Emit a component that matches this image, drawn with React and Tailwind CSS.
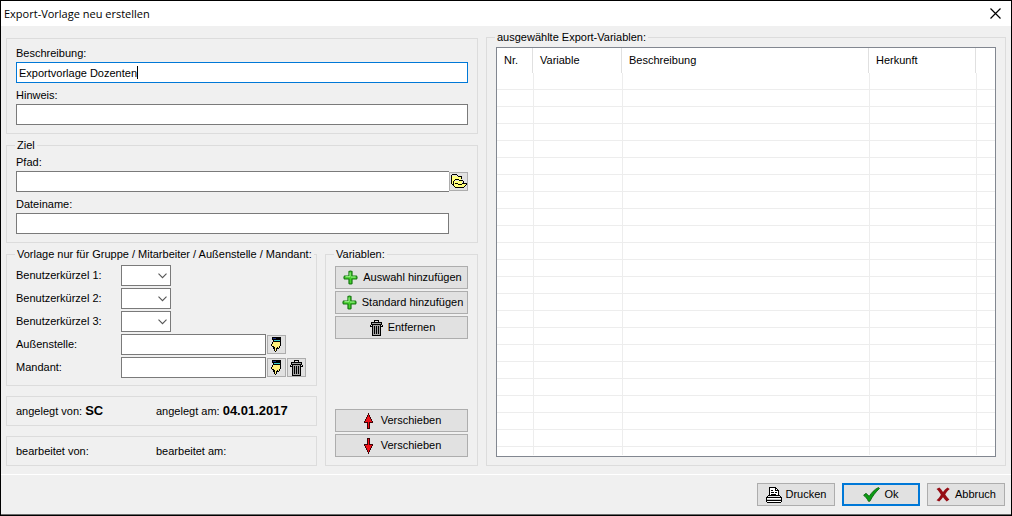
import React from "react";

const svgProps = { xmlns: "http://www.w3.org/2000/svg", "aria-hidden": true };

function PlusIcon() {
  return (
    <svg {...svgProps} width="15" height="15" viewBox="0 0 15 15" className="shrink-0">
      <path d="M6 1.500q1.500-1 3 0V6h4.500q1 1.500 0 3H9v4.500q-1.500 1-3 0V9H1.500q-1-1.500 0-3H6z" fill="#45cf2c" stroke="#14780f" strokeWidth="1.200" strokeLinejoin="round" />
      <path d="M7 2.500v4.200H2.500M8 7h4.500" fill="none" stroke="#a5f596" strokeWidth="1" />
    </svg>
  );
}

function TrashIcon() {
  return (
    <svg {...svgProps} width="13" height="16" viewBox="0 0 13 16" shapeRendering="crispEdges" className="shrink-0">
      <path d="M2 3h9v1H2zM3 5h7v10H3z" fill="#a3a3a3" />
      <path d="M4 0h5v1H4zM4 1h1v1H4zM8 1h1v1H8zM1 2h11v1H1zM1 4h11v1H1zM1 3h1v1H1zM11 3h1v1h-1zM0 5h1v2H0zM12 5h1v2h-1zM1 6h1v1H1zM11 6h1v1h-1z" fill="#000" />
      <path d="M2 5h1v10H2zM10 5h1v10h-1zM4 6h1v8H4zM6 6h1v8H6zM8 6h1v8H8zM2 15h9v1H2z" fill="#000" />
    </svg>
  );
}

function HandIcon() {
  return (
    <svg {...svgProps} width="11" height="16" viewBox="0 0 11 16" shapeRendering="crispEdges" className="shrink-0">
      <path d="M1 0h9v3H1zM2 3h8v2H2z" fill="#000" />
      <path d="M2 1h3v1H2z" fill="#1b2f80" />
      <path d="M3 3h6v1H3z" fill="#35cfcf" />
      <path d="M2 5h7v5H2zM1 7h1v2H1zM4 10h2v4H4zM7 10h1v1H7z" fill="#fff07c" />
      <path d="M1 5h1v2H1zM0 7h1v2H0zM1 9h1v1H1zM2 9h1v3H2zM3 10h1v4H3zM4 14h1v1H4zM5 11h1v3H5zM6 10h1v2H6zM8 9h1v2H8zM9 5h1v4H9zM7 11h1v1H7z" fill="#000" />
    </svg>
  );
}

function FolderIcon() {
  return (
    <svg {...svgProps} width="16" height="15" viewBox="0 0 16 15" shapeRendering="crispEdges" className="shrink-0">
      <path d="M1 2h5v1h4v3H3v5H1zM3 7h8v4h-1v2H3zM6 10h9v1h-1v1h-1v1H5z" fill="#ffff7c" />
      <path d="M1 0h5v1H1zM0 1h1v9H0zM6 1h1v1H6zM7 2h4v1H7zM10 3h1v2h-1zM1 10h2v1H1z" fill="#000" />
      <path d="M4 5h4v1H4zM3 6h1v1H3zM2 7h1v5H2zM8 6h4v1H8zM12 7h1v2h-1z" fill="#000" />
      <path d="M4 9h3v1H4zM7 10h4v1H7zM11 9h5v1h-5zM15 10h1v1h-1zM14 11h1v1h-1zM13 12h1v1h-1zM4 13h9v1H4zM3 12h1v1H3z" fill="#000" />
    </svg>
  );
}

function ArrowIcon({ down }) {
  return (
    <svg {...svgProps} width="9" height="16" viewBox="0 0 9 16" shapeRendering="crispEdges" className={down ? "shrink-0 rotate-180" : "shrink-0"}>
      <path d="M4 0h1v2h1v2h1v2h1v2h1v2H6v6H3v-6H0V8h1V6h1V4h1V2h1z" fill="#3a0508" />
      <path d="M4 2h1v2h1v2h1v2h1v1H5v6H4V9H1V8h1V6h1V4h1z" fill="#f01018" />
    </svg>
  );
}

function PrinterIcon() {
  return (
    <svg {...svgProps} width="16" height="16" viewBox="0 0 16 16" shapeRendering="crispEdges" className="shrink-0">
      <path d="M4 1h6l2 2v6H4zM1 10h14v5H1z" fill="#fff" />
      <path d="M3 0h7v1H3zM3 1h1v7H3zM10 1h1v1h-1zM11 2h1v1h-1zM12 3h1v5h-1zM9 1h1v3H9zM10 3h2v1h-2zM5 3h2v1H5zM5 5h3v1H5zM9 5h2v1H9zM5 7h5v1H5z" fill="#000" />
      <path d="M2 8h12v1H2zM1 9h1v1H1zM14 9h1v1h-1zM0 10h16v1H0zM0 11h1v4H0zM15 11h1v4h-1zM1 15h14v1H1zM1 13h14v1H1z" fill="#000" />
      <path d="M1 12h14v1H1z" fill="#c4c4c4" />
    </svg>
  );
}

function CheckIcon() {
  return (
    <svg {...svgProps} width="17" height="15" viewBox="0 0 17 15" className="shrink-0">
      <path d="M.6 8.300 3 6.300l3.200 3C8.500 5.800 11.500 2.300 15.500.5l1 .9C12.800 5 9.500 9 6.900 14.300H5.400C4.200 11.800 2.700 9.800.6 8.300z" fill="#0c9c14" stroke="#075a0c" strokeWidth=".8" />
    </svg>
  );
}

function CancelIcon() {
  return (
    <svg {...svgProps} width="14" height="15" viewBox="0 0 14 15" className="shrink-0">
      <path d="M.5 2 3.300.6c1.500 1.400 2.500 2.700 3.700 4.300C8.200 3.300 9.700 1.800 11.500.5l2.200 1.500C11.800 3.600 10.300 5.400 9.200 7.600c1.200 1.900 2.400 3.300 4.200 4.900l-2.700 2C9.300 13.200 8.200 11.900 7 10.200 5.800 11.900 4.700 13.200 3.200 14.500l-2.700-1.300C2.400 11.600 3.800 9.800 4.900 7.700 3.800 5.600 2.400 3.700.5 2z" fill="#960c14" />
    </svg>
  );
}

function Group({ legend, className, children }) {
  return (
    <fieldset className={`min-w-0 border border-[#dcdcdc] px-[9px] ${className}`}>
      {legend && <legend className="-ml-px px-0.5 leading-[15px]">{legend}</legend>}
      {children}
    </fieldset>
  );
}

const inputBase = "h-[21px] min-w-0 border bg-white px-0.5 outline-none";

function IconButton({ label, children }) {
  return (
    <button type="button" aria-label={label} className="flex size-[19px] shrink-0 items-center justify-center border border-[#adadad] bg-[#e1e1e1]">
      {children}
    </button>
  );
}

function SideButton({ children, gap = "gap-[5px]" }) {
  return (
    <button type="button" className={`flex h-[23px] w-full items-center justify-center border border-[#adadad] bg-[#e1e1e1] pl-0.5 whitespace-nowrap ${gap}`}>
      {children}
    </button>
  );
}

function ShortcutSelect({ id, label }) {
  return (
    <div className="flex h-[21px] items-center">
      <label htmlFor={id} className="w-[105px]">{label}</label>
      <div className="relative">
        <select id={id} className="block h-[21px] w-[50px] appearance-none border border-[#7a7a7a] bg-white px-1 outline-none">
          <option value=""></option>
        </select>
        <svg {...svgProps} width="9" height="6" viewBox="0 0 9 6" className="pointer-events-none absolute top-2 right-1">
          <path d="M.5.7 4.500 4.700 8.500.7" fill="none" stroke="#555" strokeWidth="1.100" />
        </svg>
      </div>
    </div>
  );
}

const columns = [
  ["Nr.", "w-9"],
  ["Variable", "w-[89px]"],
  ["Beschreibung", "w-[247px]"],
  ["Herkunft", "w-[107px]"],
];

export default function App() {
  return (
    <main className="flex min-h-screen flex-col border border-black bg-[#f0f0f0] font-['Liberation_Sans',Arial,sans-serif] text-[11px] leading-[17px] text-black">
      <header className="flex h-[25px] items-center justify-between bg-white pr-2.5 pl-[3px]">
        <h1 className="font-['Open_Sans','Noto_Sans',sans-serif] text-[11px]">Export-Vorlage neu erstellen</h1>
        <button type="button" aria-label="Schließen" className="flex">
          <svg {...svgProps} width="11" height="11" viewBox="0 0 11 11">
            <path d="M.5.5l10 10M10.500.5l-10 10" stroke="#000" strokeWidth="1.200" />
          </svg>
        </button>
      </header>

      <div className="flex grow gap-2 px-[5px] pt-1 pb-2">
        <div className="flex w-[472px] shrink-0 flex-col gap-1 pt-2">
          <Group className="flex flex-col pt-1.5 pb-2">
            <label htmlFor="beschreibung">Beschreibung:</label>
            <div className="relative flex">
              <input id="beschreibung" type="text" defaultValue="Exportvorlage Dozenten" className={`${inputBase} grow border-[#0078d7]`} />
              <span className="absolute top-1 left-[121px] h-[13px] w-px bg-black" />
            </div>
            <label htmlFor="hinweis" className="mt-1">Hinweis:</label>
            <input id="hinweis" type="text" className={`${inputBase} border-[#7a7a7a]`} />
          </Group>

          <Group legend="Ziel" className="pt-px pb-2">
            <label htmlFor="pfad" className="block">Pfad:</label>
            <div className="flex items-center">
              <input id="pfad" type="text" className={`${inputBase} grow border-r-0 border-[#7a7a7a]`} />
              <IconButton label="Pfad wählen"><FolderIcon /></IconButton>
            </div>
            <label htmlFor="dateiname" className="mt-1 block">Dateiname:</label>
            <div className="flex pr-[19px]">
              <input id="dateiname" type="text" className={`${inputBase} grow border-[#7a7a7a]`} />
            </div>
          </Group>

          <div className="flex grow gap-2">
            <div className="flex w-[311px] shrink-0 flex-col gap-2.5">
              <Group legend="Vorlage nur für Gruppe / Mitarbeiter / Außenstelle / Mandant:" className="pt-[3px] pb-[7px] whitespace-nowrap">
                <div className="flex flex-col gap-0.5">
                  <ShortcutSelect id="kuerzel1" label="Benutzerkürzel 1:" />
                  <ShortcutSelect id="kuerzel2" label="Benutzerkürzel 2:" />
                  <ShortcutSelect id="kuerzel3" label="Benutzerkürzel 3:" />
                  <div className="flex items-center gap-px">
                    <label htmlFor="aussenstelle" className="w-[104px]">Außenstelle:</label>
                    <input id="aussenstelle" type="text" className={`${inputBase} w-[145px] border-[#7a7a7a]`} />
                    <IconButton label="Außenstelle wählen"><HandIcon /></IconButton>
                  </div>
                  <div className="flex items-center gap-px">
                    <label htmlFor="mandant" className="w-[104px]">Mandant:</label>
                    <input id="mandant" type="text" className={`${inputBase} w-[145px] border-[#7a7a7a]`} />
                    <IconButton label="Mandant wählen"><HandIcon /></IconButton>
                    <IconButton label="Mandant löschen"><TrashIcon /></IconButton>
                  </div>
                </div>
              </Group>
              <div className="flex h-[30px] items-center border border-[#dcdcdc] px-[9px]">
                <p className="w-[140px]">angelegt von: <b className="text-[13px]">SC</b></p>
                <p>angelegt am: <b className="text-[13px]">04.01.2017</b></p>
              </div>
              <div className="flex h-[30px] items-center border border-[#dcdcdc] px-[9px]">
                <p className="w-[140px]">bearbeitet von:</p>
                <p>bearbeitet am:</p>
              </div>
            </div>

            <Group legend="Variablen:" className="grow pt-1 pb-2">
              <div className="flex h-full flex-col gap-0.5">
                <SideButton><PlusIcon />Auswahl hinzufügen</SideButton>
                <SideButton><PlusIcon />Standard hinzufügen</SideButton>
                <SideButton><TrashIcon />Entfernen</SideButton>
                <div className="mt-auto flex flex-col gap-0.5">
                  <SideButton gap="gap-2"><ArrowIcon />Verschieben</SideButton>
                  <SideButton gap="gap-2"><ArrowIcon down />Verschieben</SideButton>
                </div>
              </div>
            </Group>
          </div>
        </div>

        <Group legend="ausgewählte Export-Variablen:" className="grow pt-0.5 pb-2">
          <div className="h-full border border-[#828790] bg-white">
            <table className="w-full table-fixed border-separate border-spacing-0">
              <thead>
                <tr className="h-[25px]">
                  {columns.map(([name, width]) => (
                    <th key={name} className={`border-r border-[#e0e0e0] p-0 pl-[7px] text-left font-normal ${width}`}>{name}</th>
                  ))}
                  <th className="p-0" />
                </tr>
              </thead>
              <tbody>
                {Array.from({ length: 22 }, (_, row) => (
                  <tr key={row} className="h-[17px]">
                    <td className="border-b border-[#ededed] p-0" />
                    {columns.map(([name]) => (
                      <td key={name} className="border-b border-l border-[#ededed] p-0" />
                    ))}
                  </tr>
                ))}
                <tr className="h-2">
                  <td className="p-0" />
                  {columns.map(([name]) => (
                    <td key={name} className="border-l border-[#ededed] p-0" />
                  ))}
                </tr>
              </tbody>
            </table>
          </div>
        </Group>
      </div>

      <footer className="flex justify-end gap-[7px] border-t border-b border-t-white border-b-[#6b6b6b] px-1.5 pt-2 pb-2">
        <button type="button" className="flex h-[23px] w-[78px] items-center justify-center gap-1 border border-[#adadad] bg-[#e1e1e1]">
          <PrinterIcon />Drucken
        </button>
        <button type="button" className="flex h-[23px] w-[78px] items-center justify-center gap-1 border-2 border-[#0078d7] bg-[#e1e1e1]">
          <CheckIcon />Ok
        </button>
        <button type="button" className="flex h-[23px] w-[78px] items-center justify-center gap-[5px] border border-[#adadad] bg-[#e1e1e1]">
          <CancelIcon />Abbruch
        </button>
      </footer>
    </main>
  );
}
